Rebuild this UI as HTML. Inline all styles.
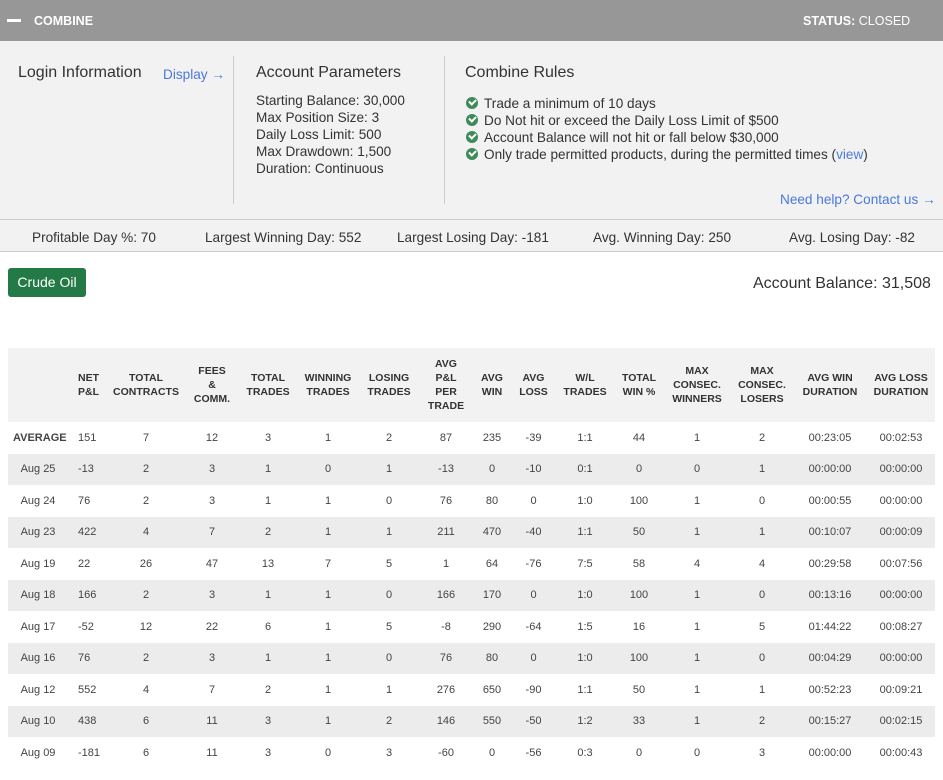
<!DOCTYPE html>
<html><head><meta charset="utf-8"><style>
*{margin:0;padding:0;box-sizing:border-box}
body{width:943px;height:780px;overflow:hidden;background:#fff;font-family:"Liberation Sans",sans-serif;color:#333;position:relative}
.top{position:absolute;left:0;top:0;width:943px;height:41px;background:#979797;color:#fff;font-size:12.5px;font-weight:bold}
.top .dash{position:absolute;left:7px;top:19px;width:14px;height:3px;background:#fff}
.top .t1{position:absolute;left:34px;top:14px}
.top .t2{position:absolute;left:803px;top:14px}
.top .t2 span{font-weight:normal}
.panel{position:absolute;left:0;top:41px;width:943px;height:211px;background:#f2f2f2;border-bottom:1px solid #ccc}
.a{position:absolute;font-size:16px;color:#333}
.s{position:absolute;font-size:13.6px;line-height:17px;color:#333}
.link{color:#4a77e0}
.vl{position:absolute;top:56px;width:1px;height:148px;background:#ccc}
.hl{position:absolute;left:0;width:943px;height:1px;background:#ccc}
.chk{display:inline-block;width:12px;height:12px;border-radius:50%;background:#3e8b57;vertical-align:-1px;margin-right:6px;position:relative}
.chk:after{content:"";position:absolute;left:3px;top:2px;width:5px;height:3px;border-left:2px solid #fff;border-bottom:2px solid #fff;transform:rotate(-45deg)}
.stat{position:absolute;top:230px;font-size:13.6px}
.btn{position:absolute;left:8px;top:268px;width:78px;height:29px;background:#237a46;border-radius:3px;color:#fff;font-size:14px;text-align:center;line-height:29px}
table{position:absolute;left:8px;top:348px;width:927px;border-collapse:collapse;font-size:11px;color:#444;table-layout:fixed}
th{height:74px;background:#f2f2f2;font-weight:bold;font-size:10.5px;line-height:14px;text-align:center;color:#333}
td{height:31.5px;text-align:center}
tr.g td{background:#ececec}
td.b{font-weight:bold;text-align:left;padding-left:5px}
td:nth-child(2),th:nth-child(2){text-align:left;padding-left:10px}
</style></head><body>
<div class="top"><div class="dash"></div><div class="t1">COMBINE</div><div class="t2">STATUS: <span>CLOSED</span></div></div>
<div class="panel"></div>
<div class="a" style="left:18px;top:64px">Login Information</div>
<div class="s link" style="left:163px;top:66px">Display →</div>
<div class="vl" style="left:233px"></div>
<div class="a" style="left:256px;top:64px">Account Parameters</div>
<div class="s" style="left:256px;top:92px">Starting Balance: 30,000<br>Max Position Size: 3<br>Daily Loss Limit: 500<br>Max Drawdown: 1,500<br>Duration: Continuous</div>
<div class="vl" style="left:444px"></div>
<div class="a" style="left:465px;top:64px">Combine Rules</div>
<div class="s" style="left:466px;top:95px"><span class="chk"></span>Trade a minimum of 10 days<br><span class="chk"></span>Do Not hit or exceed the Daily Loss Limit of $500<br><span class="chk"></span>Account Balance will not hit or fall below $30,000<br><span class="chk"></span>Only trade permitted products, during the permitted times (<span class="link">view</span>)</div>
<div class="s link" style="left:780px;top:191px">Need help? Contact us →</div>
<div class="hl" style="top:219px"></div>
<div class="stat" style="left:32px">Profitable Day %: 70</div>
<div class="stat" style="left:205px">Largest Winning Day: 552</div>
<div class="stat" style="left:397px">Largest Losing Day: -181</div>
<div class="stat" style="left:593px">Avg. Winning Day: 250</div>
<div class="stat" style="left:789px">Avg. Losing Day: -82</div>
<div class="btn">Crude Oil</div>
<div style="position:absolute;left:753px;top:275px;font-size:16px">Account Balance: 31,508</div>
<table>
<colgroup><col style="width:60px"><col style="width:38px"><col style="width:80px"><col style="width:52px"><col style="width:60px"><col style="width:60px"><col style="width:62px"><col style="width:52px"><col style="width:40px"><col style="width:43px"><col style="width:60px"><col style="width:48px"><col style="width:68px"><col style="width:62px"><col style="width:74px"><col style="width:68px"></colgroup>
<tr><th></th><th>NET<br>P&amp;L</th><th>TOTAL<br>CONTRACTS</th><th>FEES<br>&amp;<br>COMM.</th><th>TOTAL<br>TRADES</th><th>WINNING<br>TRADES</th><th>LOSING<br>TRADES</th><th>AVG<br>P&amp;L<br>PER<br>TRADE</th><th>AVG<br>WIN</th><th>AVG<br>LOSS</th><th>W/L<br>TRADES</th><th>TOTAL<br>WIN %</th><th>MAX<br>CONSEC.<br>WINNERS</th><th>MAX<br>CONSEC.<br>LOSERS</th><th>AVG WIN<br>DURATION</th><th>AVG LOSS<br>DURATION</th></tr>
<tr><td class="b">AVERAGE</td><td>151</td><td>7</td><td>12</td><td>3</td><td>1</td><td>2</td><td>87</td><td>235</td><td>-39</td><td>1:1</td><td>44</td><td>1</td><td>2</td><td>00:23:05</td><td>00:02:53</td></tr>
<tr class="g"><td>Aug 25</td><td>-13</td><td>2</td><td>3</td><td>1</td><td>0</td><td>1</td><td>-13</td><td>0</td><td>-10</td><td>0:1</td><td>0</td><td>0</td><td>1</td><td>00:00:00</td><td>00:00:00</td></tr>
<tr><td>Aug 24</td><td>76</td><td>2</td><td>3</td><td>1</td><td>1</td><td>0</td><td>76</td><td>80</td><td>0</td><td>1:0</td><td>100</td><td>1</td><td>0</td><td>00:00:55</td><td>00:00:00</td></tr>
<tr class="g"><td>Aug 23</td><td>422</td><td>4</td><td>7</td><td>2</td><td>1</td><td>1</td><td>211</td><td>470</td><td>-40</td><td>1:1</td><td>50</td><td>1</td><td>1</td><td>00:10:07</td><td>00:00:09</td></tr>
<tr><td>Aug 19</td><td>22</td><td>26</td><td>47</td><td>13</td><td>7</td><td>5</td><td>1</td><td>64</td><td>-76</td><td>7:5</td><td>58</td><td>4</td><td>4</td><td>00:29:58</td><td>00:07:56</td></tr>
<tr class="g"><td>Aug 18</td><td>166</td><td>2</td><td>3</td><td>1</td><td>1</td><td>0</td><td>166</td><td>170</td><td>0</td><td>1:0</td><td>100</td><td>1</td><td>0</td><td>00:13:16</td><td>00:00:00</td></tr>
<tr><td>Aug 17</td><td>-52</td><td>12</td><td>22</td><td>6</td><td>1</td><td>5</td><td>-8</td><td>290</td><td>-64</td><td>1:5</td><td>16</td><td>1</td><td>5</td><td>01:44:22</td><td>00:08:27</td></tr>
<tr class="g"><td>Aug 16</td><td>76</td><td>2</td><td>3</td><td>1</td><td>1</td><td>0</td><td>76</td><td>80</td><td>0</td><td>1:0</td><td>100</td><td>1</td><td>0</td><td>00:04:29</td><td>00:00:00</td></tr>
<tr><td>Aug 12</td><td>552</td><td>4</td><td>7</td><td>2</td><td>1</td><td>1</td><td>276</td><td>650</td><td>-90</td><td>1:1</td><td>50</td><td>1</td><td>1</td><td>00:52:23</td><td>00:09:21</td></tr>
<tr class="g"><td>Aug 10</td><td>438</td><td>6</td><td>11</td><td>3</td><td>1</td><td>2</td><td>146</td><td>550</td><td>-50</td><td>1:2</td><td>33</td><td>1</td><td>2</td><td>00:15:27</td><td>00:02:15</td></tr>
<tr><td>Aug 09</td><td>-181</td><td>6</td><td>11</td><td>3</td><td>0</td><td>3</td><td>-60</td><td>0</td><td>-56</td><td>0:3</td><td>0</td><td>0</td><td>3</td><td>00:00:00</td><td>00:00:43</td></tr>
</table>
</body></html>
